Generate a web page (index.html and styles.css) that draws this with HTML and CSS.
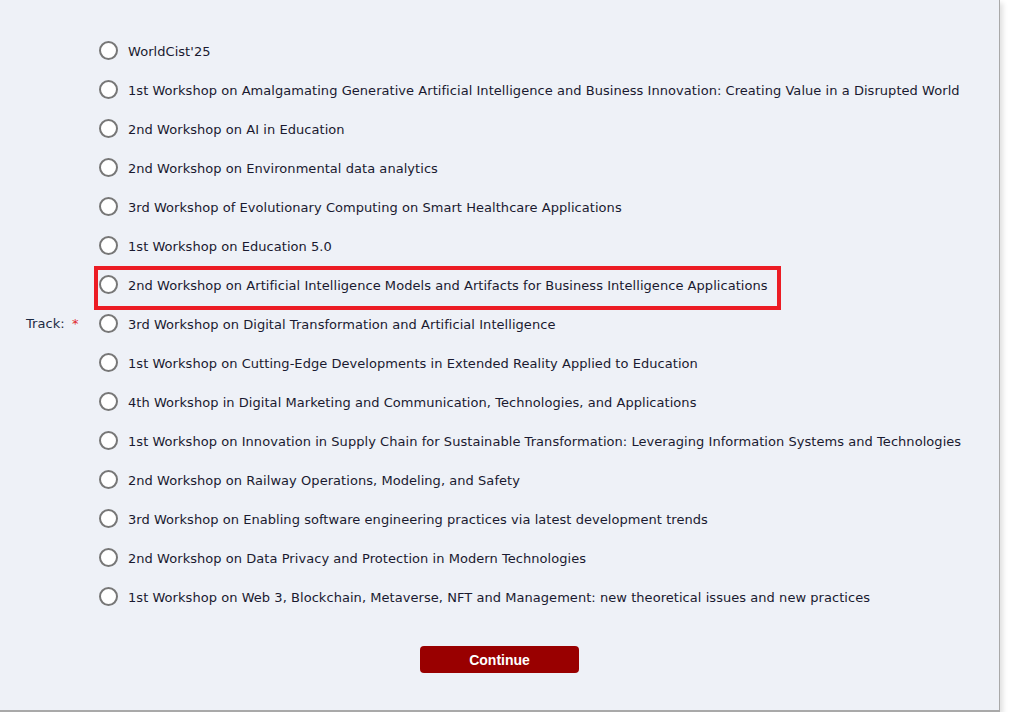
FILE: index.html
```html
<!DOCTYPE html>
<html>
<head>
<meta charset="utf-8">
<link rel="stylesheet" href="styles.css">
</head>
<body>
<div class="panel">
  <form class="form">
    <div class="field">
      <div class="label">Track: <span class="req">*</span></div>
      <div class="options">
        <label class="opt"><span class="radio"></span><span class="txt">WorldCist'25</span></label>
        <label class="opt"><span class="radio"></span><span class="txt">1st Workshop on Amalgamating Generative Artificial Intelligence and Business Innovation: Creating Value in a Disrupted World</span></label>
        <label class="opt"><span class="radio"></span><span class="txt">2nd Workshop on AI in Education</span></label>
        <label class="opt"><span class="radio"></span><span class="txt">2nd Workshop on Environmental data analytics</span></label>
        <label class="opt"><span class="radio"></span><span class="txt">3rd Workshop of Evolutionary Computing on Smart Healthcare Applications</span></label>
        <label class="opt"><span class="radio"></span><span class="txt">1st Workshop on Education 5.0</span></label>
        <label class="opt marked"><span class="radio"></span><span class="txt">2nd Workshop on Artificial Intelligence Models and Artifacts for Business Intelligence Applications</span></label>
        <label class="opt"><span class="radio"></span><span class="txt">3rd Workshop on Digital Transformation and Artificial Intelligence</span></label>
        <label class="opt"><span class="radio"></span><span class="txt">1st Workshop on Cutting-Edge Developments in Extended Reality Applied to Education</span></label>
        <label class="opt"><span class="radio"></span><span class="txt">4th Workshop in Digital Marketing and Communication, Technologies, and Applications</span></label>
        <label class="opt"><span class="radio"></span><span class="txt">1st Workshop on Innovation in Supply Chain for Sustainable Transformation: Leveraging Information Systems and Technologies</span></label>
        <label class="opt"><span class="radio"></span><span class="txt">2nd Workshop on Railway Operations, Modeling, and Safety</span></label>
        <label class="opt"><span class="radio"></span><span class="txt">3rd Workshop on Enabling software engineering practices via latest development trends</span></label>
        <label class="opt"><span class="radio"></span><span class="txt">2nd Workshop on Data Privacy and Protection in Modern Technologies</span></label>
        <label class="opt"><span class="radio"></span><span class="txt">1st Workshop on Web 3, Blockchain, Metaverse, NFT and Management: new theoretical issues and new practices</span></label>
      </div>
    </div>
    <div class="actions">
      <button type="button" class="btn">Continue</button>
    </div>
  </form>
</div>
</body>
</html>
```
FILE: styles.css
```css
html, body {
  margin: 0;
  padding: 0;
  background: #ffffff;
}
.panel {
  width: 1000px;
  height: 712px;
  box-sizing: border-box;
  background: #eef1f7;
  border-right: 1px solid #a9a9a9;
  border-bottom: 2px solid #a9a9a9;
  box-shadow: 3px 3px 5px rgba(0,0,0,0.12);
  font-family: "DejaVu Sans", Verdana, sans-serif;
  font-size: 13px;
  letter-spacing: 0.05px;
  color: #1a1a30;
}
.form {
  padding-top: 31px;
}
.field {
  display: flex;
  align-items: center;
}
.label {
  width: 73px;
  padding-left: 26px;
  color: #1d2b44;
}
.req {
  color: #e0282c;
  margin-left: 3px;
}
.options {
  display: flex;
  flex-direction: column;
}
.opt {
  position: relative;
  display: flex;
  align-items: center;
  height: 39px;
  align-self: flex-start;
}
.radio {
  width: 15px;
  height: 15px;
  border: 2px solid #777777;
  border-radius: 50%;
  background: #ffffff;
  flex: none;
}
.txt {
  margin-left: 10px;
  padding-top: 2px;
  white-space: nowrap;
}
.marked::after {
  content: "";
  position: absolute;
  left: -5px;
  right: -13px;
  top: 1px;
  bottom: -6px;
  border: 4px solid #ec1c24;
}
.actions {
  display: flex;
  justify-content: center;
  margin-top: 30px;
}
.btn {
  width: 159px;
  height: 27px;
  background: #990000;
  color: #ffffff;
  border: none;
  border-radius: 4px;
  font-family: "Liberation Sans", Arial, sans-serif;
  font-weight: bold;
  font-size: 14px;
  letter-spacing: 0;
  padding: 0;
}
```
